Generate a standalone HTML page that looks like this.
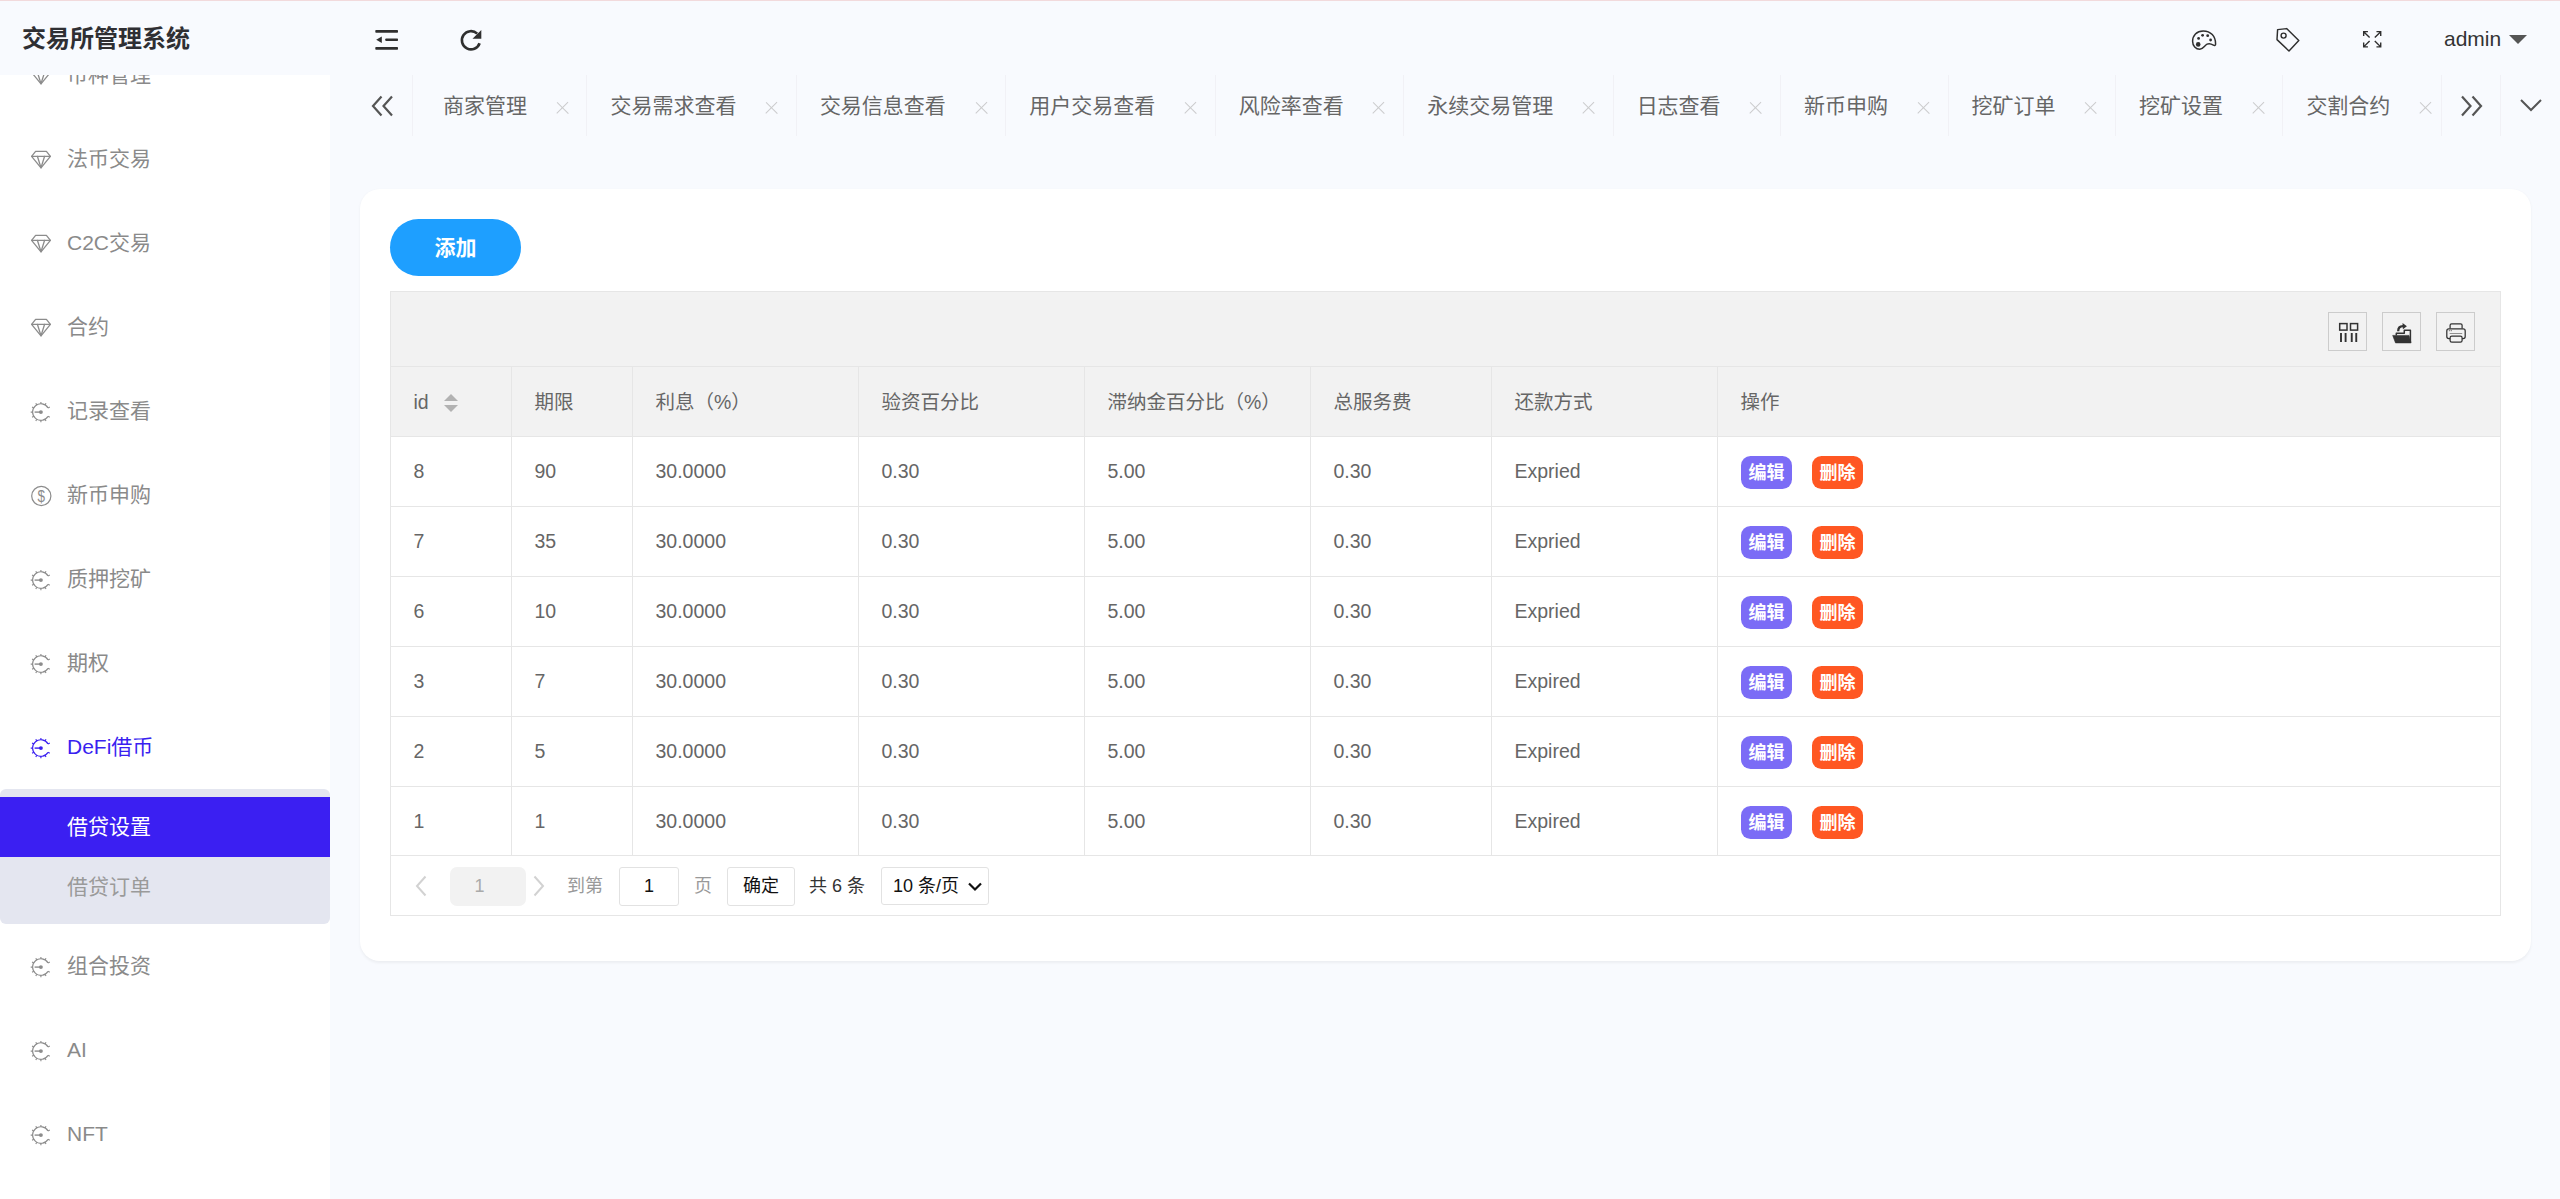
<!DOCTYPE html>
<html lang="zh-CN">
<head>
<meta charset="utf-8">
<title>交易所管理系统</title>
<style>
*{box-sizing:border-box;margin:0;padding:0}
html,body{width:2560px;height:1199px;overflow:hidden}
body{background:#f8fafe;font-family:"Liberation Sans","Noto Sans CJK SC",sans-serif;font-size:21px;color:#666;position:relative}
svg{display:block}
.abs{position:absolute}
#topline{position:absolute;left:0;top:0;width:2560px;height:1px;background:#f2dadc;z-index:20}
/* sidebar */
#side{position:absolute;left:0;top:0;width:330px;height:1199px;background:#fff;overflow:hidden}
#logo{position:absolute;left:0;top:0;width:330px;height:75px;background:#f8fafe;z-index:5;font-weight:bold;font-size:24px;color:#2f2f33;line-height:77px;padding-left:22px;letter-spacing:0}
#menu{position:absolute;left:0;top:33px;width:330px}
.mi{position:relative;height:84px;line-height:84px;padding-left:67px;color:#8a8a8a;font-size:21px;white-space:nowrap}
.mi svg{position:absolute;left:29px;top:30px}
.mi.act{color:#3a1ff0}
#sub{background:#e4e6f0;height:135px;padding-top:8px;border-radius:6px}
.si{height:60px;line-height:60px;padding-left:67px;color:#9a9a9a;font-size:21px}
.si.on{background:#3b1ff2;color:#fff}
/* header */
#hdr{position:absolute;left:330px;top:0;width:2230px;height:75px}
.hi{position:absolute}
#admin{position:absolute;left:2444px;top:0;line-height:78.5px;font-size:21px;color:#333}
#caret{position:absolute;left:2509px;top:35px;width:0;height:0;border-left:9px solid transparent;border-right:9px solid transparent;border-top:9px solid #555}
/* tabs */
#tabs{position:absolute;left:412px;top:75px;width:2029px;height:61px;overflow:hidden;white-space:nowrap;border-left:1px solid #f1f1f6}
#tabs .in{position:absolute;left:7px;top:0;height:61px;white-space:nowrap;font-size:0}
.tab{display:inline-block;position:relative;height:61px;line-height:62px;padding:0 59.45px 0 23px;font-size:21px;color:#666;border-right:1px solid #f1f1f6}
.tab i{position:absolute;right:18px;top:27px;width:12px;height:12px}
.tab i:before,.tab i:after{content:"";position:absolute;left:5.25px;top:-2px;width:1.4px;height:15.5px;background:#cbcbcd}
.tab i:before{transform:rotate(45deg)}
.tab i:after{transform:rotate(-45deg)}
#tnext{position:absolute;left:2441px;top:75px;width:60px;height:61px;border-left:1px solid #f1f1f6;border-right:1px solid #f1f1f6;background:#f8fafe}
/* card */
#card{position:absolute;left:360px;top:189px;width:2171px;height:772px;background:#fff;border-radius:20px;box-shadow:0 1.5px 3px rgba(0,0,0,0.05)}
#add{position:absolute;left:30px;top:30px;width:131px;height:57px;border-radius:29px;background:#1e9fff;color:#fff;font-weight:bold;font-size:21px;line-height:57px;text-align:center}
#tbl{position:absolute;left:30px;top:102px;width:2111px;height:625px;border:1px solid #e6e6e6;background:#fff}
#tool{position:absolute;left:0;top:0;width:2109px;height:75px;background:#f2f2f2;border-bottom:1px solid #e6e6e6}
.tb{position:absolute;top:20px;width:39px;height:39px;border:1px solid #ccc}
.row{position:absolute;left:0;width:2109px;height:70px;border-bottom:1px solid #e6e6e6}
.row.h{background:#f2f2f2}
.row.h .c{line-height:71.5px}
.c{position:absolute;top:0;height:69px;line-height:69px;padding-left:22.5px;border-right:1px solid #e6e6e6;font-size:19.5px;color:#666;white-space:nowrap}
.c.last{border-right:none}
.btn{position:absolute;top:19px;width:51px;height:33px;border-radius:9.5px;color:#fff;font-weight:bold;font-size:18px;line-height:35px;text-align:center}
.b1{left:23px;background:#7b6cf6}
.b2{left:94px;background:#ff5722}
#pg{position:absolute;left:0;top:564px;width:2109px;height:59px;font-size:18px}
.row.lastrow{height:69px}.row.lastrow .c{height:68px}
.sort{position:absolute;left:52.5px;top:27px;width:15px;height:18px}.sort:before,.sort:after{content:"";position:absolute;left:0;width:0;height:0;border-left:7.5px solid transparent;border-right:7.5px solid transparent}.sort:before{top:0;border-bottom:7.5px solid #b2b2b2}.sort:after{top:10.5px;border-top:7.5px solid #b2b2b2}
</style>
</head>
<body>
<div id="side">
  <div id="menu">
<div class="mi"><svg style="left:30px;top:32px" width="22" height="20" viewBox="0 0 22 20" fill="none" stroke="#8c8c8c" stroke-width="1.3" stroke-linejoin="round" stroke-linecap="round"><path d="M5.600 2.300h10.800l4 5L11 18.800 1.600 7.300z"/><path d="M1.600 7.300h18.800"/><path d="M7.400 7.300L11 18.800l3.600-11.500"/></svg><span>币种管理</span></div>
<div class="mi"><svg style="left:30px;top:32px" width="22" height="20" viewBox="0 0 22 20" fill="none" stroke="#8c8c8c" stroke-width="1.3" stroke-linejoin="round" stroke-linecap="round"><path d="M5.600 2.300h10.800l4 5L11 18.800 1.600 7.300z"/><path d="M1.600 7.300h18.800"/><path d="M7.400 7.300L11 18.800l3.600-11.500"/></svg><span>法币交易</span></div>
<div class="mi"><svg style="left:30px;top:32px" width="22" height="20" viewBox="0 0 22 20" fill="none" stroke="#8c8c8c" stroke-width="1.3" stroke-linejoin="round" stroke-linecap="round"><path d="M5.600 2.300h10.800l4 5L11 18.800 1.600 7.300z"/><path d="M1.600 7.300h18.800"/><path d="M7.400 7.300L11 18.800l3.600-11.500"/></svg><span>C2C交易</span></div>
<div class="mi"><svg style="left:30px;top:32px" width="22" height="20" viewBox="0 0 22 20" fill="none" stroke="#8c8c8c" stroke-width="1.3" stroke-linejoin="round" stroke-linecap="round"><path d="M5.600 2.300h10.800l4 5L11 18.800 1.600 7.300z"/><path d="M1.600 7.300h18.800"/><path d="M7.400 7.300L11 18.800l3.600-11.500"/></svg><span>合约</span></div>
<div class="mi"><svg style="left:28.5px;top:30px" width="24" height="26" viewBox="0 0 24 26" fill="none" stroke="#8c8c8c" stroke-width="1.150"><path d="M19.01 8.83A8.3 8.3 0 1 0 19.01 17.37"/><path d="M19.09 17.25L20.73 18.20M16.05 20.29L17.00 21.93M11.90 21.40L11.90 23.30M7.75 20.29L6.80 21.93M4.71 17.25L3.07 18.20M3.60 13.10L1.70 13.10M4.71 8.95L3.07 8.00M7.75 5.91L6.80 4.27M11.90 4.80L11.90 2.90M16.05 5.91L17.00 4.27M19.09 8.95L20.73 8.00" stroke-width="1.150"/><path d="M5.600 13.1h6.300" stroke-width="1.400"/><circle cx="11.9" cy="13.1" r="1.950" fill="#8c8c8c" stroke="none"/></svg><span>记录查看</span></div>
<div class="mi"><svg style="left:28.5px;top:30.5px" width="24" height="24" viewBox="0 0 24 24" fill="none" stroke="#8c8c8c" stroke-width="1.2"><circle cx="12.300" cy="12" r="9.600"/><text transform="translate(12.300 17.500) scale(0.86 1)" text-anchor="middle" font-family="Liberation Sans, sans-serif" font-size="15.700" fill="#8c8c8c" stroke="none">$</text></svg><span>新币申购</span></div>
<div class="mi"><svg style="left:28.5px;top:30px" width="24" height="26" viewBox="0 0 24 26" fill="none" stroke="#8c8c8c" stroke-width="1.150"><path d="M19.01 8.83A8.3 8.3 0 1 0 19.01 17.37"/><path d="M19.09 17.25L20.73 18.20M16.05 20.29L17.00 21.93M11.90 21.40L11.90 23.30M7.75 20.29L6.80 21.93M4.71 17.25L3.07 18.20M3.60 13.10L1.70 13.10M4.71 8.95L3.07 8.00M7.75 5.91L6.80 4.27M11.90 4.80L11.90 2.90M16.05 5.91L17.00 4.27M19.09 8.95L20.73 8.00" stroke-width="1.150"/><path d="M5.600 13.1h6.300" stroke-width="1.400"/><circle cx="11.9" cy="13.1" r="1.950" fill="#8c8c8c" stroke="none"/></svg><span>质押挖矿</span></div>
<div class="mi"><svg style="left:28.5px;top:30px" width="24" height="26" viewBox="0 0 24 26" fill="none" stroke="#8c8c8c" stroke-width="1.150"><path d="M19.01 8.83A8.3 8.3 0 1 0 19.01 17.37"/><path d="M19.09 17.25L20.73 18.20M16.05 20.29L17.00 21.93M11.90 21.40L11.90 23.30M7.75 20.29L6.80 21.93M4.71 17.25L3.07 18.20M3.60 13.10L1.70 13.10M4.71 8.95L3.07 8.00M7.75 5.91L6.80 4.27M11.90 4.80L11.90 2.90M16.05 5.91L17.00 4.27M19.09 8.95L20.73 8.00" stroke-width="1.150"/><path d="M5.600 13.1h6.300" stroke-width="1.400"/><circle cx="11.9" cy="13.1" r="1.950" fill="#8c8c8c" stroke="none"/></svg><span>期权</span></div>
<div class="mi act"><svg style="left:28.5px;top:30px" width="24" height="26" viewBox="0 0 24 26" fill="none" stroke="#3a1ff0" stroke-width="1.150"><path d="M19.01 8.83A8.3 8.3 0 1 0 19.01 17.37"/><path d="M19.09 17.25L20.73 18.20M16.05 20.29L17.00 21.93M11.90 21.40L11.90 23.30M7.75 20.29L6.80 21.93M4.71 17.25L3.07 18.20M3.60 13.10L1.70 13.10M4.71 8.95L3.07 8.00M7.75 5.91L6.80 4.27M11.90 4.80L11.90 2.90M16.05 5.91L17.00 4.27M19.09 8.95L20.73 8.00" stroke-width="1.150"/><path d="M5.600 13.1h6.300" stroke-width="1.400"/><circle cx="11.9" cy="13.1" r="1.950" fill="#3a1ff0" stroke="none"/></svg><span>DeFi借币</span></div>
<div id="sub"><div class="si on">借贷设置</div><div class="si">借贷订单</div></div>
<div class="mi"><svg style="left:28.5px;top:30px" width="24" height="26" viewBox="0 0 24 26" fill="none" stroke="#8c8c8c" stroke-width="1.150"><path d="M19.01 8.83A8.3 8.3 0 1 0 19.01 17.37"/><path d="M19.09 17.25L20.73 18.20M16.05 20.29L17.00 21.93M11.90 21.40L11.90 23.30M7.75 20.29L6.80 21.93M4.71 17.25L3.07 18.20M3.60 13.10L1.70 13.10M4.71 8.95L3.07 8.00M7.75 5.91L6.80 4.27M11.90 4.80L11.90 2.90M16.05 5.91L17.00 4.27M19.09 8.95L20.73 8.00" stroke-width="1.150"/><path d="M5.600 13.1h6.300" stroke-width="1.400"/><circle cx="11.9" cy="13.1" r="1.950" fill="#8c8c8c" stroke="none"/></svg><span>组合投资</span></div>
<div class="mi"><svg style="left:28.5px;top:30px" width="24" height="26" viewBox="0 0 24 26" fill="none" stroke="#8c8c8c" stroke-width="1.150"><path d="M19.01 8.83A8.3 8.3 0 1 0 19.01 17.37"/><path d="M19.09 17.25L20.73 18.20M16.05 20.29L17.00 21.93M11.90 21.40L11.90 23.30M7.75 20.29L6.80 21.93M4.71 17.25L3.07 18.20M3.60 13.10L1.70 13.10M4.71 8.95L3.07 8.00M7.75 5.91L6.80 4.27M11.90 4.80L11.90 2.90M16.05 5.91L17.00 4.27M19.09 8.95L20.73 8.00" stroke-width="1.150"/><path d="M5.600 13.1h6.300" stroke-width="1.400"/><circle cx="11.9" cy="13.1" r="1.950" fill="#8c8c8c" stroke="none"/></svg><span>AI</span></div>
<div class="mi"><svg style="left:28.5px;top:30px" width="24" height="26" viewBox="0 0 24 26" fill="none" stroke="#8c8c8c" stroke-width="1.150"><path d="M19.01 8.83A8.3 8.3 0 1 0 19.01 17.37"/><path d="M19.09 17.25L20.73 18.20M16.05 20.29L17.00 21.93M11.90 21.40L11.90 23.30M7.75 20.29L6.80 21.93M4.71 17.25L3.07 18.20M3.60 13.10L1.70 13.10M4.71 8.95L3.07 8.00M7.75 5.91L6.80 4.27M11.90 4.80L11.90 2.90M16.05 5.91L17.00 4.27M19.09 8.95L20.73 8.00" stroke-width="1.150"/><path d="M5.600 13.1h6.300" stroke-width="1.400"/><circle cx="11.9" cy="13.1" r="1.950" fill="#8c8c8c" stroke="none"/></svg><span>NFT</span></div>
</div>
  <div id="logo">交易所管理系统</div>
</div>
<div id="hdr">
<svg class="hi" style="left:45px;top:29px" width="24" height="22" viewBox="0 0 24 22"><g fill="#2f2f2f"><rect x="0.300" y="1.100" width="22.700" height="2.600" rx="0.700"/><rect x="10.300" y="9.450" width="12.700" height="2.600" rx="0.700"/><rect x="0.300" y="18.100" width="22.700" height="2.600" rx="0.700"/><path d="M1.2 10.8L6.8 7.6v6.4z"/></g></svg>
<svg class="hi" style="left:129px;top:28px" width="24" height="24" viewBox="0 0 24 24"><path d="M20.6 15.2A9.1 9.1 0 1 1 18.2 5.6" fill="none" stroke="#2f2f2f" stroke-width="2.650"/><path d="M22.300 1.900v8.900h-8.800z" fill="#2f2f2f"/></svg>
<svg class="hi" style="left:1860px;top:28px" width="28" height="24" viewBox="0 0 28 24"><path d="M13.2 2.9C6.6 2.9 2.6 7.6 2.6 13.2c0 4.6 3.2 8 7.2 8 3.6 0 4.4-3.4 7.3-5 2.4-1.3 4.3-.3 6.3.9 1.300 0.800 2.200 0.300 2.200-1.200C25.600 8.400 20.800 2.900 13.200 2.900z" fill="none" stroke="#2f2f2f" stroke-width="1.500" stroke-linejoin="round"/><circle cx="8.2" cy="16.4" r="2.3" fill="#2f2f2f"/><circle cx="8.6" cy="10.4" r="1.4" fill="#2f2f2f"/><circle cx="12.6" cy="7.3" r="1.4" fill="#2f2f2f"/><circle cx="17.7" cy="7.7" r="1.4" fill="#2f2f2f"/><circle cx="20.6" cy="12" r="1.4" fill="#2f2f2f"/></svg>
<svg class="hi" style="left:1944px;top:26px" width="28" height="28" viewBox="0 0 28 28"><path d="M3.6 3.6L12.6 2.6L24.8 14.6L15 25L3 13.6z" fill="none" stroke="#2f2f2f" stroke-width="1.450" stroke-linejoin="round"/><circle cx="9.600" cy="9.600" r="2.500" fill="none" stroke="#2f2f2f" stroke-width="1.400"/></svg>
<svg class="hi" style="left:2031.600px;top:29.800px" width="20.400" height="20.400" viewBox="0 0 22 22" fill="none" stroke="#2f2f2f" stroke-width="1.500"><path d="M1.8 6.4V1.800H6.400M1.800 1.800L8.200 8.200"/><path d="M15.600 1.800H20.200V6.400M20.200 1.800L13.800 8.200"/><path d="M1.800 13.600V18.200H6.400M1.800 18.200L8.200 11.800"/><path d="M15.600 18.200H20.200V13.600M20.200 18.200L13.800 11.800"/></svg>
<div id="admin" style="left:2114px">admin</div><div id="caret" style="left:2179px"></div></div>

<svg class="abs" style="left:370px;top:94px" width="26" height="24" viewBox="0 0 26 24" fill="none" stroke="#555" stroke-width="2.2"><path d="M11.500 2.500L3 12l8.500 9.500M22 2.500L13.500 12l8.500 9.500"/></svg>
<div id="tabs"><div class="in"><div class="tab">商家管理<i></i></div><div class="tab">交易需求查看<i></i></div><div class="tab">交易信息查看<i></i></div><div class="tab">用户交易查看<i></i></div><div class="tab">风险率查看<i></i></div><div class="tab">永续交易管理<i></i></div><div class="tab">日志查看<i></i></div><div class="tab">新币申购<i></i></div><div class="tab">挖矿订单<i></i></div><div class="tab">挖矿设置<i></i></div><div class="tab">交割合约<i></i></div><div class="tab">币币交易<i></i></div></div></div>
<div id="tnext"><svg style="position:absolute;left:16px;top:19px" width="26" height="24" viewBox="0 0 26 24" fill="none" stroke="#555" stroke-width="2.2"><path d="M4 2.500L12.500 12L4 21.500M14.500 2.500L23 12l-8.500 9.500"/></svg></div>
<svg class="abs" style="left:2519px;top:97px" width="24" height="16" viewBox="0 0 24 16" fill="none" stroke="#555" stroke-width="2"><path d="M2 3l10 10L22 3"/></svg>

<div id="card">
  <div id="add">添加</div>
  <div id="tbl">
<div id="tool">
<div class="tb" style="left:1937px"><svg width="37" height="37" viewBox="0 0 37 37" fill="none" stroke="#333" stroke-width="1.5"><rect x="10.700" y="10.600" width="7.300" height="6.500"/><rect x="21.500" y="10.600" width="7.100" height="6.500"/><path d="M12 20.100v8.800M16.600 20.100v8.800M22.750 20.100v8.800M27.250 20.100v8.800" stroke-width="1.900"/></svg></div>
<div class="tb" style="left:1991px"><svg width="37" height="37" viewBox="0 0 37 37"><path d="M9.700 22.400H26l2.100 7.500H12.500z" fill="#333" stroke="#333" stroke-width="0.600" stroke-linejoin="round"/><path d="M13.300 22.500V20.300h8V17.200h6.100V29.400" fill="none" stroke="#333" stroke-width="1.500" stroke-linejoin="round"/><path d="M15.200 18.200C15.200 14.600 17.200 13.100 20 13.100" fill="none" stroke="#333" stroke-width="2.300"/><path d="M19.500 9.900L23.900 13.200L19.900 16.300z" fill="#333"/></svg></div>
<div class="tb" style="left:2045px"><svg width="37" height="37" viewBox="0 0 37 37" fill="none" stroke="#333" stroke-width="1.250"><path d="M13.100 15.600V12.300q0-1.500 1.500-1.500h9q1.500 0 1.500 1.500v3.300"/><rect x="9.800" y="15.900" width="18.400" height="9.700" rx="2"/><rect x="13.100" y="23" width="12" height="6.200" rx="1.700" fill="#f2f2f2"/><path d="M12.700 20.500h12.500" stroke-width="0.700" stroke="#666"/><path d="M11.800 17.700h3.400" stroke-width="0.800" stroke="#555" stroke-dasharray="1.300 0.600"/></svg></div>
</div>
<div class="row h" style="top:75px"><div class="c" style="left:0px;width:121px">id<span class="sort"></span></div><div class="c" style="left:121px;width:121px">期限</div><div class="c" style="left:242px;width:226px">利息（%）</div><div class="c" style="left:468px;width:226px">验资百分比</div><div class="c" style="left:694px;width:226px">滞纳金百分比（%）</div><div class="c" style="left:920px;width:181px">总服务费</div><div class="c" style="left:1101px;width:226px">还款方式</div><div class="c last" style="left:1327px;width:782px">操作</div></div>
<div class="row" style="top:145px"><div class="c" style="left:0px;width:121px">8</div><div class="c" style="left:121px;width:121px">90</div><div class="c" style="left:242px;width:226px">30.0000</div><div class="c" style="left:468px;width:226px">0.30</div><div class="c" style="left:694px;width:226px">5.00</div><div class="c" style="left:920px;width:181px">0.30</div><div class="c" style="left:1101px;width:226px">Expried</div><div class="c last" style="left:1327px;width:782px"><span class="btn b1">编辑</span><span class="btn b2">删除</span></div></div>
<div class="row" style="top:215px"><div class="c" style="left:0px;width:121px">7</div><div class="c" style="left:121px;width:121px">35</div><div class="c" style="left:242px;width:226px">30.0000</div><div class="c" style="left:468px;width:226px">0.30</div><div class="c" style="left:694px;width:226px">5.00</div><div class="c" style="left:920px;width:181px">0.30</div><div class="c" style="left:1101px;width:226px">Expried</div><div class="c last" style="left:1327px;width:782px"><span class="btn b1">编辑</span><span class="btn b2">删除</span></div></div>
<div class="row" style="top:285px"><div class="c" style="left:0px;width:121px">6</div><div class="c" style="left:121px;width:121px">10</div><div class="c" style="left:242px;width:226px">30.0000</div><div class="c" style="left:468px;width:226px">0.30</div><div class="c" style="left:694px;width:226px">5.00</div><div class="c" style="left:920px;width:181px">0.30</div><div class="c" style="left:1101px;width:226px">Expried</div><div class="c last" style="left:1327px;width:782px"><span class="btn b1">编辑</span><span class="btn b2">删除</span></div></div>
<div class="row" style="top:355px"><div class="c" style="left:0px;width:121px">3</div><div class="c" style="left:121px;width:121px">7</div><div class="c" style="left:242px;width:226px">30.0000</div><div class="c" style="left:468px;width:226px">0.30</div><div class="c" style="left:694px;width:226px">5.00</div><div class="c" style="left:920px;width:181px">0.30</div><div class="c" style="left:1101px;width:226px">Expired</div><div class="c last" style="left:1327px;width:782px"><span class="btn b1">编辑</span><span class="btn b2">删除</span></div></div>
<div class="row" style="top:425px"><div class="c" style="left:0px;width:121px">2</div><div class="c" style="left:121px;width:121px">5</div><div class="c" style="left:242px;width:226px">30.0000</div><div class="c" style="left:468px;width:226px">0.30</div><div class="c" style="left:694px;width:226px">5.00</div><div class="c" style="left:920px;width:181px">0.30</div><div class="c" style="left:1101px;width:226px">Expired</div><div class="c last" style="left:1327px;width:782px"><span class="btn b1">编辑</span><span class="btn b2">删除</span></div></div>
<div class="row lastrow" style="top:495px"><div class="c" style="left:0px;width:121px">1</div><div class="c" style="left:121px;width:121px">1</div><div class="c" style="left:242px;width:226px">30.0000</div><div class="c" style="left:468px;width:226px">0.30</div><div class="c" style="left:694px;width:226px">5.00</div><div class="c" style="left:920px;width:181px">0.30</div><div class="c" style="left:1101px;width:226px">Expired</div><div class="c last" style="left:1327px;width:782px"><span class="btn b1">编辑</span><span class="btn b2">删除</span></div></div>
<div id="pg">
<svg class="abs" style="left:23px;top:18px" width="14" height="24" viewBox="0 0 14 24" fill="none" stroke="#d2d2d2" stroke-width="2"><path d="M11.500 2.500L3 12l8.500 9.500"/></svg>
<div class="abs" style="left:59px;top:11px;width:76px;height:39px;border-radius:7px;background:#f2f2f2;color:#aaa;text-align:center;line-height:39px;padding-right:17px">1</div>
<svg class="abs" style="left:141px;top:18px" width="14" height="24" viewBox="0 0 14 24" fill="none" stroke="#d2d2d2" stroke-width="2"><path d="M2.500 2.500L11 12l-8.500 9.500"/></svg>
<div class="abs" style="left:176px;top:11px;line-height:38px;color:#999">到第</div>
<div class="abs" style="left:228px;top:11px;width:60px;height:39px;border:1px solid #e2e2e2;border-radius:3px;background:#fff;color:#111;text-align:center;line-height:37px">1</div>
<div class="abs" style="left:303px;top:11px;line-height:38px;color:#999">页</div>
<div class="abs" style="left:336px;top:11px;width:68px;height:39px;border:1px solid #e2e2e2;border-radius:3px;background:#fff;color:#111;text-align:center;line-height:37px">确定</div>
<div class="abs" style="left:418px;top:11px;line-height:38px;color:#333">共 6 条</div>
<div class="abs" style="left:490px;top:11px;width:108px;height:38px;border:1px solid #e2e2e2;border-radius:3px;background:#fff;color:#111;line-height:36px;padding-left:11px">10 条/页<svg class="abs" style="left:85px;top:14px" width="16" height="10" viewBox="0 0 16 10" fill="none" stroke="#111" stroke-width="2.2"><path d="M2 1.500l6 6 6-6"/></svg></div>
</div>
</div>
</div>
<div id="topline"></div>
</body>
</html>
